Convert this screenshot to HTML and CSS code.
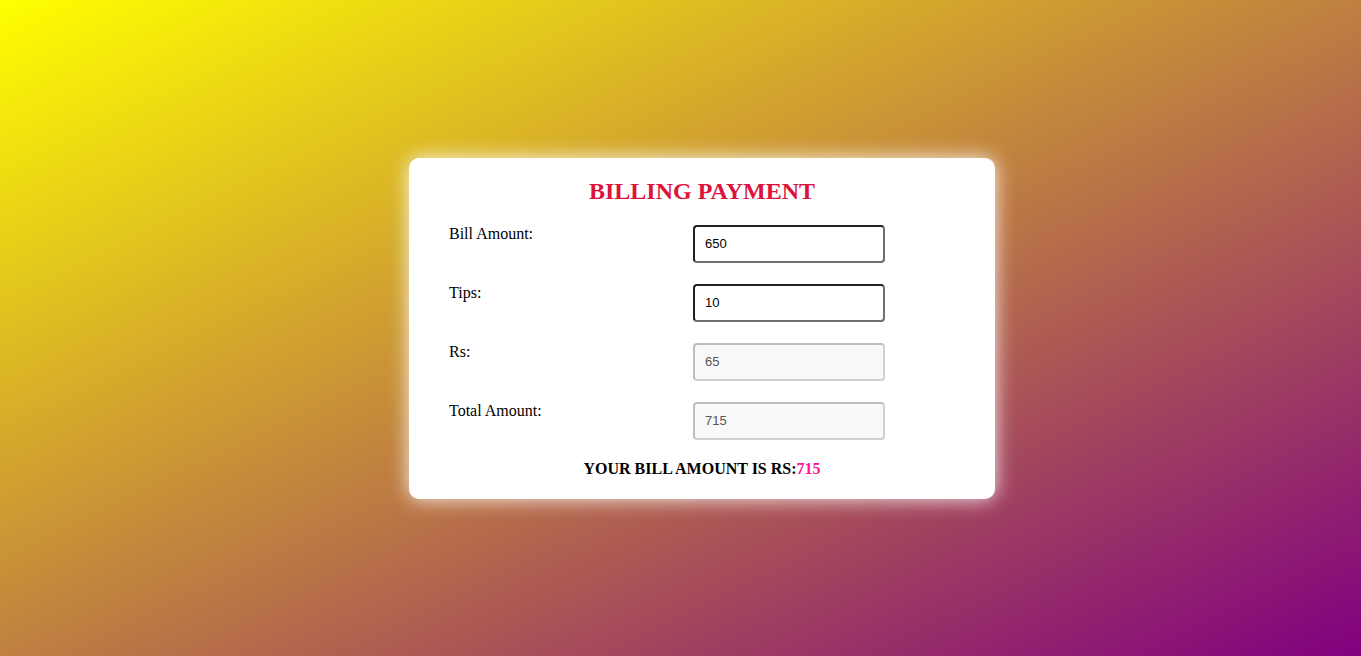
FILE: index.html
```html
<!DOCTYPE html>
<html>
<head>
<meta charset="utf-8">
<link rel="stylesheet" href="styles.css">
</head>
<body>
<div class="page">
  <div class="card">
    <h2 class="title">BILLING PAYMENT</h2>
    <div class="form">
      <label class="label">Bill Amount:</label>
      <input class="field" type="text" value="650">
      <label class="label">Tips:</label>
      <input class="field" type="text" value="10">
      <label class="label">Rs:</label>
      <input class="field readonly" type="text" value="65" readonly>
      <label class="label">Total Amount:</label>
      <input class="field readonly" type="text" value="715" readonly>
    </div>
    <p class="result">YOUR BILL AMOUNT IS RS:<span class="amount">715</span></p>
  </div>
</div>
</body>
</html>
```
FILE: styles.css
```css
html, body {
  margin: 0;
  padding: 0;
}
body {
  font-family: "Liberation Serif", "Times New Roman", serif;
  background: linear-gradient(to bottom right, #ffff00, #800080);
  min-height: 656px;
}
.page {
  height: 656px;
  display: flex;
  align-items: center;
  padding-left: 409px;
  box-sizing: border-box;
}
.card {
  width: 586px;
  height: 341px;
  box-sizing: border-box;
  background: #fff;
  border-radius: 10px;
  box-shadow: 0 0 20px rgba(255, 255, 255, 0.9);
  padding: 19px 40px 0 40px;
}
.title {
  margin: 0;
  text-align: center;
  color: #dc143c;
  font-size: 24px;
  font-weight: bold;
  line-height: 29px;
}
.form {
  margin-top: 19px;
  display: grid;
  grid-template-columns: 244px 192px;
  row-gap: 21px;
}
.label {
  font-size: 16px;
  line-height: 18px;
  color: #000;
}
.field {
  width: 192px;
  height: 38px;
  box-sizing: border-box;
  border: 2px solid #222;
  border-bottom-color: #6f6f6f;
  border-right-color: #6f6f6f;
  border-radius: 4px;
  padding: 0 10px;
  font-family: "Liberation Sans", Arial, sans-serif;
  font-size: 13px;
  color: #000;
  background: #fff;
  outline: none;
}
.field.readonly {
  border-color: #bdbdbd;
  border-bottom-color: #d0d0d0;
  border-right-color: #d0d0d0;
  background: #f9f9f9;
  color: #555;
}
.result {
  margin: 20px 0 0;
  text-align: center;
  font-size: 16px;
  font-weight: bold;
  line-height: 18px;
  color: #000;
}
.amount {
  color: #ff1493;
}
```
